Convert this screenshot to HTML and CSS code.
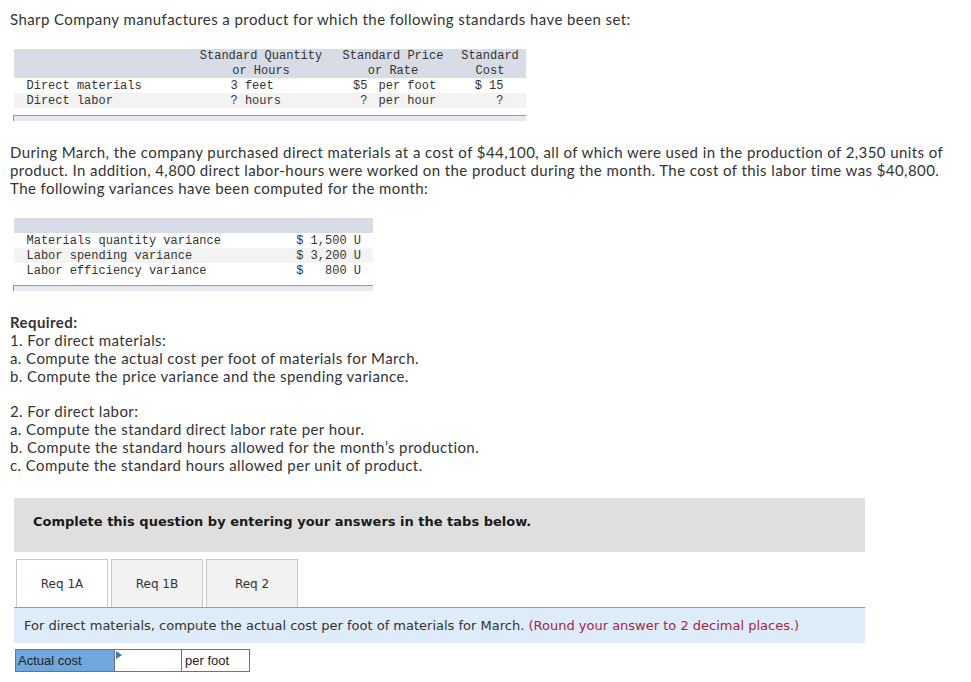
FILE: index.html
```html
<!DOCTYPE html>
<html>
<head>
<meta charset="utf-8">
<link rel="stylesheet" href="styles.css">
</head>
<body>
<p class="intro">Sharp Company manufactures a product for which the following standards have been set:</p>

<table class="data std">
  <thead>
    <tr>
      <th class="c1"></th>
      <th class="c2">Standard Quantity<br>or Hours</th>
      <th class="c3">Standard Price<br>or Rate</th>
      <th class="c4">Standard<br>Cost</th>
    </tr>
  </thead>
  <tbody>
    <tr>
      <td class="lbl">Direct materials</td>
      <td class="qty">3 feet</td>
      <td class="rate"><span class="amt">$5</span><span class="unit">per foot</span></td>
      <td class="cost">$ 15</td>
    </tr>
    <tr class="alt">
      <td class="lbl">Direct labor</td>
      <td class="qty">? hours</td>
      <td class="rate"><span class="amt">?</span><span class="unit">per hour</span></td>
      <td class="cost">?</td>
    </tr>
    <tr class="gap"><td colspan="4"></td></tr>
    <tr class="foot"><td colspan="4"></td></tr>
  </tbody>
</table>

<p class="para">During March, the company purchased direct materials at a cost of $44,100, all of which were used in the production of 2,350 units of product. In addition, 4,800 direct labor-hours were worked on the product during the month. The cost of this labor time was $40,800. The following variances have been computed for the month:</p>

<table class="data var">
  <thead>
    <tr><th colspan="2"></th></tr>
  </thead>
  <tbody>
    <tr>
      <td class="lbl">Materials quantity variance</td>
      <td class="val">$ 1,500 U</td>
    </tr>
    <tr class="alt">
      <td class="lbl">Labor spending variance</td>
      <td class="val">$ 3,200 U</td>
    </tr>
    <tr>
      <td class="lbl">Labor efficiency variance</td>
      <td class="val">$   800 U</td>
    </tr>
    <tr class="gap"><td colspan="2"></td></tr>
    <tr class="foot"><td colspan="2"></td></tr>
  </tbody>
</table>

<div class="required">
  <p class="req-title">Required:</p>
  <p>1. For direct materials:</p>
  <p>a. Compute the actual cost per foot of materials for March.</p>
  <p>b. Compute the price variance and the spending variance.</p>
  <p class="spaced">2. For direct labor:</p>
  <p>a. Compute the standard direct labor rate per hour.</p>
  <p>b. Compute the standard hours allowed for the month’s production.</p>
  <p>c. Compute the standard hours allowed per unit of product.</p>
</div>

<div class="prompt">Complete this question by entering your answers in the tabs below.</div>

<div class="tabs">
  <div class="tab active">Req 1A</div>
  <div class="tab">Req 1B</div>
  <div class="tab">Req 2</div>
</div>

<div class="instr">For direct materials, compute the actual cost per foot of materials for March. <span class="hint">(Round your answer to 2 decimal places.)</span></div>

<div class="answer">
  <div class="a-label">Actual cost</div>
  <div class="a-input"><span class="tri"></span></div>
  <div class="a-unit">per foot</div>
</div>
</body>
</html>
```

FILE: styles.css
```css
body {
  margin: 0;
  padding: 10px 0 0 10px;
  font-family: Lato, "Open Sans", sans-serif;
  font-size: 15px;
  line-height: 18px;
  letter-spacing: 0.42px;
  color: #333;
  background: #fff;
}

p { margin: 0; }

.intro { margin: 0; }

.data {
  border-collapse: collapse;
  font-family: "Liberation Mono", "DejaVu Sans Mono", monospace;
  font-size: 12px;
  line-height: 15px;
  letter-spacing: 0;
  color: #333;
  margin-left: 3px;
  table-layout: fixed;
}
.data th, .data td { padding: 0; font-weight: normal; white-space: pre; }
.data tbody td { padding-top: 1px; line-height: 14px; }
.data thead th { background: #d8dce6; }
.data tr.alt td { background: #f3f3f3; }
.data tr.gap td { height: 7px; padding: 0; }
.data tr.foot td {
  height: 5px;
  padding: 0;
  background: #e6e9ef;
  border-top: 1px solid #9a9a9a;
  border-left: 1px solid #9a9a9a;
}

.std { margin-top: 21px; width: 512px; }
.std thead th { height: 29px; text-align: center; line-height: 14.5px; }
.std .c1 { width: 177px; }
.std .c2 { width: 141px; }
.std .c3 { width: 123px; }
.std .c4 { width: 71px; }
.std .lbl { padding-left: 13px; }
.std .qty { padding-left: 40px; }
.std .amt { display: inline-block; width: 36px; text-align: right; }
.std .unit { margin-left: 11px; }
.std .cost { text-align: right; padding-right: 22px; }

.para { margin-top: 22px; width: 945px; }

.var { margin-top: 21px; width: 360px; }
.var thead th { height: 15px; }
.var .lbl { padding-left: 13px; }
.var .val { text-align: right; padding-right: 12px; }

.required { margin-top: 22px; }
.req-title { font-weight: bold; }
.required .spaced { margin-top: 17px; }

.prompt {
  margin: 24px 0 0 4px;
  width: 832px;
  height: 38px;
  padding: 16px 0 0 19px;
  background: #dfdfdf;
  font-family: "DejaVu Sans", Verdana, sans-serif;
  font-weight: bold;
  font-size: 13px;
  line-height: 15px;
  letter-spacing: 0;
  color: #1a1a1a;
}

.tabs {
  display: flex;
  gap: 3px;
  margin: 7px 0 0 6px;
}
.tab {
  width: 90px;
  height: 47px;
  border: 1px solid #c9c9c9;
  border-bottom: none;
  background: #f2f2f2;
  font-family: "DejaVu Sans", Verdana, sans-serif;
  font-size: 12px;
  line-height: 48px;
  letter-spacing: 0;
  text-align: center;
  color: #333;
}
.tab.active { background: #fff; }

.instr {
  margin-left: 4px;
  width: 841px;
  height: 35px;
  padding-left: 10px;
  border-top: 1px solid #9b9b9b;
  background: #ddecf8;
  font-family: "DejaVu Sans", Verdana, sans-serif;
  font-size: 13px;
  line-height: 36px;
  letter-spacing: 0;
  color: #333;
}
.hint { color: #a3283f; }

.answer {
  display: flex;
  margin: 6px 0 0 5px;
  font-family: "Liberation Sans", Arial, sans-serif;
  font-size: 13px;
  letter-spacing: 0;
  color: #222;
}
.answer > div {
  height: 21px;
  line-height: 21px;
  border: 1px solid #6b7480;
}
.a-label {
  width: 96px;
  padding-left: 2px;
  background: #6fa8dc;
}
.a-input {
  position: relative;
  width: 66px;
  background: #fff;
  border-left: none !important;
}
.tri {
  position: absolute;
  left: 1px;
  top: 1px;
  width: 0;
  height: 0;
  border-top: 4px solid transparent;
  border-bottom: 4px solid transparent;
  border-left: 6px solid #3a73b8;
}
.a-unit {
  width: 64px;
  padding-left: 3px;
  background: #fff;
  border-left: none !important;
}
```
